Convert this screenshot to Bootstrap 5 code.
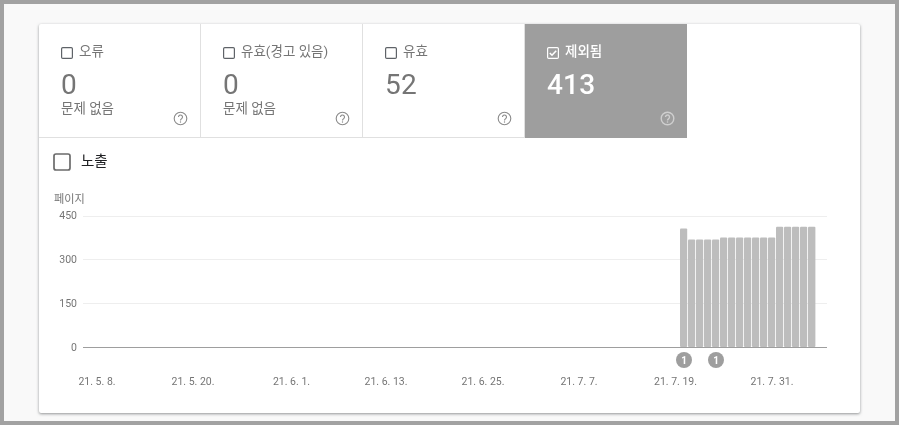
<!DOCTYPE html>
<html lang="ko">
<head>
<meta charset="utf-8">
<title>색인 범위</title>
<link href="https://cdn.jsdelivr.net/npm/bootstrap@5.3.0/dist/css/bootstrap.min.css" rel="stylesheet">
<style>
html,body{height:100%;margin:0}
body{font-family:Roboto,"Noto Sans CJK KR",sans-serif;background:#fff;overflow:hidden}
.frame{width:899px;height:425px;border:4px solid #a2a2a2;background:#f9f9f9;padding:20px 35px 8px 35px;will-change:transform}
.panel{width:821px;height:389px;background:#fff;border-radius:2px;box-shadow:0 1px 3px rgba(60,64,67,.55)}
.tiles{height:114px}
.tile{width:162px;height:114px;padding:17px 22px 0;border-right:1px solid #e0e0e0;border-bottom:1px solid #e0e0e0;color:#757575}
.tile-on{background:#9e9e9e;color:#fff;border-color:#9e9e9e;border-right-color:#e0e0e0}
.tile-on:last-child{border-right:0}
.tile-head{font-size:13.5px;line-height:20px;height:20px;gap:6px}
.box{width:12px;height:12px;flex:none;margin-top:6px}
.num{font-size:28px;line-height:32px;margin-top:8px;font-weight:400;letter-spacing:.2px}
.sub{font-size:13.5px;line-height:16px;margin-top:-1px}
.help{position:absolute;right:12px;bottom:11px;width:15px;height:15px}
.metric{height:48px;padding-left:14px;gap:10px;font-size:14.5px;color:#202124}
.big-box{width:18px;height:18px;flex:none}
.plot{display:block}
.plot text{font-family:Roboto,"Noto Sans CJK KR",sans-serif;font-size:10.5px;fill:#757575}
.plot .axis-title{font-size:11.2px}
.plot .pin{fill:#fff;font-size:10px;font-weight:700}
</style>
</head>
<body>
<div class="frame">
  <div class="panel">
    <div class="d-flex tiles">
      <div class="tile position-relative">
        <div class="d-flex tile-head"><svg class="box" viewBox="0 0 12 12"><rect x=".6" y=".6" width="10.8" height="10.8" rx="1.2" fill="none" stroke="#5f6368" stroke-width="1.2"/></svg><span>오류</span></div>
        <div class="num">0</div>
        <div class="sub">문제 없음</div>
        <svg class="help" viewBox="0 0 15 15"><circle cx="7.5" cy="7.5" r="6.3" fill="none" stroke="#8a8a8a" stroke-width="1.1"/><path d="M5.5 6a2 2 0 1 1 3.2 1.6c-.8.6-1.2 1-1.2 1.9" fill="none" stroke="#8a8a8a" stroke-width="1.1"/><circle cx="7.5" cy="11" r=".7" fill="#8a8a8a"/></svg>
      </div>
      <div class="tile position-relative">
        <div class="d-flex tile-head"><svg class="box" viewBox="0 0 12 12"><rect x=".6" y=".6" width="10.8" height="10.8" rx="1.2" fill="none" stroke="#5f6368" stroke-width="1.2"/></svg><span>유효(경고 있음)</span></div>
        <div class="num">0</div>
        <div class="sub">문제 없음</div>
        <svg class="help" viewBox="0 0 15 15"><circle cx="7.5" cy="7.5" r="6.3" fill="none" stroke="#8a8a8a" stroke-width="1.1"/><path d="M5.5 6a2 2 0 1 1 3.2 1.6c-.8.6-1.2 1-1.2 1.9" fill="none" stroke="#8a8a8a" stroke-width="1.1"/><circle cx="7.5" cy="11" r=".7" fill="#8a8a8a"/></svg>
      </div>
      <div class="tile position-relative">
        <div class="d-flex tile-head"><svg class="box" viewBox="0 0 12 12"><rect x=".6" y=".6" width="10.8" height="10.8" rx="1.2" fill="none" stroke="#5f6368" stroke-width="1.2"/></svg><span>유효</span></div>
        <div class="num">52</div>
        <svg class="help" viewBox="0 0 15 15"><circle cx="7.5" cy="7.5" r="6.3" fill="none" stroke="#8a8a8a" stroke-width="1.1"/><path d="M5.5 6a2 2 0 1 1 3.2 1.6c-.8.6-1.2 1-1.2 1.9" fill="none" stroke="#8a8a8a" stroke-width="1.1"/><circle cx="7.5" cy="11" r=".7" fill="#8a8a8a"/></svg>
      </div>
      <div class="tile tile-on position-relative">
        <div class="d-flex tile-head fw-medium"><svg class="box" viewBox="0 0 12 12"><rect x=".6" y=".6" width="10.8" height="10.8" rx="1.2" fill="none" stroke="#fff" stroke-width="1.2"/><path d="M2.8 6l2.2 2.2 4.2-4.4" fill="none" stroke="#fff" stroke-width="1.6"/></svg><span>제외됨</span></div>
        <div class="num fw-medium">413</div>
        <svg class="help" viewBox="0 0 15 15"><circle cx="7.5" cy="7.5" r="6.3" fill="none" stroke="#cfcfcf" stroke-width="1.4"/><path d="M5.5 6a2 2 0 1 1 3.2 1.6c-.8.6-1.2 1-1.2 1.9" fill="none" stroke="#cfcfcf" stroke-width="1.4"/><circle cx="7.5" cy="11" r=".8" fill="#cfcfcf"/></svg>
      </div>
    </div>
    <div class="d-flex align-items-center metric"><svg class="big-box" viewBox="0 0 18 18"><rect x="1" y="1" width="16" height="16" rx="2" fill="none" stroke="#6b6b6b" stroke-width="1.7"/></svg><span>노출</span></div>
    <svg class="plot" width="821" height="227" viewBox="39 186 821 227">
      <text class="axis-title" x="54" y="203">페이지</text>
      <g stroke="#eeeeee"><line x1="83" x2="827" y1="216.5" y2="216.5"/><line x1="83" x2="827" y1="259.5" y2="259.5"/><line x1="83" x2="827" y1="303.5" y2="303.5"/></g>
      <g text-anchor="end"><text x="77" y="219">450</text><text x="77" y="263">300</text><text x="77" y="307">150</text><text x="77" y="351">0</text></g>
      <g fill="#bdbdbd">
        <rect x="680" y="228.5" width="7.2" height="118.5" rx="1"/>
        <rect x="688" y="239.5" width="7.2" height="107.5" rx="1"/>
        <rect x="696" y="239.5" width="7.2" height="107.5" rx="1"/>
        <rect x="704" y="239.5" width="7.2" height="107.5" rx="1"/>
        <rect x="712" y="239.5" width="7.2" height="107.5" rx="1"/>
        <rect x="720" y="237.5" width="7.2" height="109.5" rx="1"/>
        <rect x="728" y="237.5" width="7.2" height="109.5" rx="1"/>
        <rect x="736" y="237.5" width="7.2" height="109.5" rx="1"/>
        <rect x="744" y="237.5" width="7.2" height="109.5" rx="1"/>
        <rect x="752" y="237.5" width="7.2" height="109.5" rx="1"/>
        <rect x="760" y="237.5" width="7.2" height="109.5" rx="1"/>
        <rect x="768" y="237.5" width="7.2" height="109.5" rx="1"/>
        <rect x="776" y="226.8" width="7.2" height="120.2" rx="1"/>
        <rect x="784" y="226.8" width="7.2" height="120.2" rx="1"/>
        <rect x="792" y="226.8" width="7.2" height="120.2" rx="1"/>
        <rect x="800" y="226.8" width="7.2" height="120.2" rx="1"/>
        <rect x="808" y="226.8" width="7.4" height="120.2" rx="1"/>
      </g>
      <line x1="83" x2="827" y1="347.5" y2="347.5" stroke="#9e9e9e"/>
      <g fill="#9e9e9e"><circle cx="684" cy="360" r="8"/><circle cx="716" cy="360" r="8"/></g>
      <g text-anchor="middle"><text class="pin" x="684" y="363.5">1</text><text class="pin" x="716" y="363.5">1</text></g>
      <g text-anchor="middle">
        <text x="97" y="385">21. 5. 8.</text><text x="193" y="385">21. 5. 20.</text><text x="291.5" y="385">21. 6. 1.</text><text x="386" y="385">21. 6. 13.</text><text x="483" y="385">21. 6. 25.</text><text x="579" y="385">21. 7. 7.</text><text x="675.5" y="385">21. 7. 19.</text><text x="772" y="385">21. 7. 31.</text>
      </g>
    </svg>
  </div>
</div>
<script src="https://cdn.jsdelivr.net/npm/bootstrap@5.3.0/dist/js/bootstrap.bundle.min.js"></script>
</body>
</html>
